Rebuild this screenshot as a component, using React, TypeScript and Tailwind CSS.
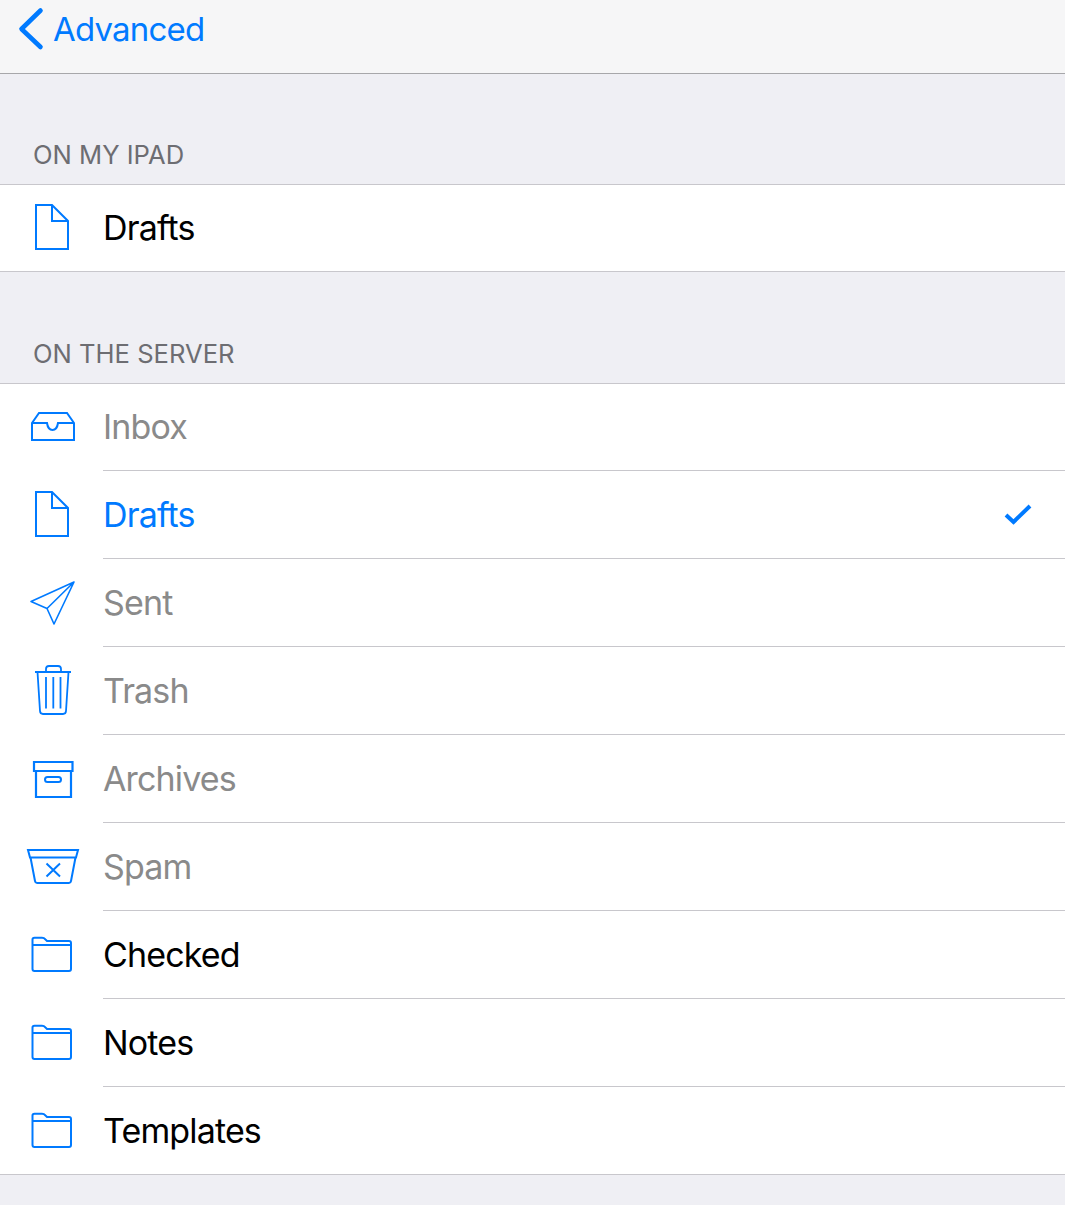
const blue = "#007aff";

function Icon({ top, children }: { top: number; children: React.ReactNode }) {
  return (
    <svg
      className="w-[60px] h-[60px] shrink-0 ml-[22px] mr-[21px]"
      viewBox={`22 ${top} 60 60`}
      fill="none"
      stroke={blue}
      strokeWidth={2}
    >
      {children}
    </svg>
  );
}

const doc = (y: number) => (
  <path d={`M36 ${y}H52L68 ${y + 16}V${y + 44}H36ZM52 ${y}V${y + 16}H68`} />
);
const folder = (y: number) => (
  <path
    d={`M32.500 ${y + 24}V${y + 2.5}Q32.500 ${y + 0.8} 34.500 ${y + 0.8}H42Q44 ${y + 0.8} 45.500 ${y + 2.5}L47 ${y + 4}H69Q71 ${y + 4} 71 ${y + 6}V${y + 32}Q71 ${y + 34} 69 ${y + 34}H34.500Q32.500 ${y + 34} 32.500 ${y + 32}ZM32.500 ${y + 8}H71`}
  />
);

const Row = ({
  label,
  icon,
  color = "text-black",
  first = false,
  check = false,
}: {
  label: string;
  icon: React.ReactNode;
  color?: string;
  first?: boolean;
  check?: boolean;
}) => (
  <div className={`flex items-stretch bg-white ${first ? "h-[86px]" : "h-[87px]"}`}>
    <div className="flex items-center">{icon}</div>
    <div className={`flex-1 flex items-center ${color}`}>
      <span className={`flex-1 ${first ? "" : "pt-px"}`}>{label}</span>
      {check && (
        <svg className="w-[30px] h-[24px] mr-[32px]" viewBox="1003 503 30 24" fill="none" stroke={blue} strokeWidth={4}>
          <path d="M1006 515L1013.500 522L1030 506" />
        </svg>
      )}
    </div>
  </div>
);

const Sep = ({ inset }: { inset?: boolean }) => (
  <div className="h-px bg-white">
    <div className={`h-px bg-[#c8c7cc] ${inset ? "ml-[103px]" : ""}`} />
  </div>
);

export default function App() {
  return (
    <div
      className="w-[1065px] h-[1205px] overflow-hidden bg-[#efeff4] text-[34px] leading-[40px] tracking-[-0.85px]"
      style={{ fontFamily: "Inter, 'Liberation Sans', sans-serif" }}
    >
      <header className="h-[74px] bg-[#f6f6f7] border-b border-[#a7a7aa] flex items-start">
        <div className="flex items-center h-[58px] text-[#007aff] text-[33px] tracking-[-0.8px]">
          <svg className="w-[53px] h-[58px] shrink-0" viewBox="0 0 53 58" fill="none" stroke={blue} strokeWidth={4.6} strokeLinecap="round" strokeLinejoin="round">
            <path d="M40.500 10.500L21.500 29L40.500 47" />
          </svg>
          <span>Advanced</span>
        </div>
      </header>

      <div className="h-[110px] flex items-end pl-[33px] pb-[13px] text-[25.600px] leading-[32px] tracking-[0px] text-[#6d6d72]">
        ON MY IPAD
      </div>
      <Sep />
      <Row label="Drafts" first icon={<Icon top={198}>{doc(205)}</Icon>} />
      <Sep />

      <div className="h-[111px] flex items-end pl-[33px] pb-[13px] text-[25.600px] leading-[32px] tracking-[0px] text-[#6d6d72]">
        ON THE SERVER
      </div>
      <Sep />
      <Row
        label="Inbox"
        first
        color="text-[#8a8a8a]"
        icon={
          <Icon top={398}>
            <path d="M32 424L39 414H67L74 424V441H32ZM32 424H47Q48 431 52.500 431Q57 431 58 424H74" />
          </Icon>
        }
      />
      <Sep inset />
      <Row label="Drafts" color="text-[#007aff]" check icon={<Icon top={485}>{doc(492)}</Icon>} />
      <Sep inset />
      <Row
        label="Sent"
        color="text-[#8a8a8a]"
        icon={
          <Icon top={573}>
            <path d="M74 582L31 601.500L47 608.500L54 624ZM74 582L47 608.500" strokeLinejoin="round" strokeWidth={1.6} />
          </Icon>
        }
      />
      <Sep inset />
      <Row
        label="Trash"
        color="text-[#8a8a8a]"
        icon={
          <Icon top={661}>
            <path d="M35 672H71M46 672V669Q46 666 49 666H58Q61 666 61 669V672M37.500 672L40 711Q40.200 714 43 714H63Q65.800 714 66 711L68.500 672M46 677V708.500M53.300 677V708.500M60.500 677V708.500" strokeWidth={1.8} />
          </Icon>
        }
      />
      <Sep inset />
      <Row
        label="Archives"
        color="text-[#8a8a8a]"
        icon={
          <Icon top={749}>
            <path d="M34 762H72.500V771H34ZM36 771V797H71V771" strokeWidth={2.200} />
            <rect x="45" y="777" width="16" height="5" rx="2.500" />
          </Icon>
        }
      />
      <Sep inset />
      <Row
        label="Spam"
        color="text-[#8a8a8a]"
        icon={
          <Icon top={837}>
            <path d="M28 850H78L76 857.500H30ZM30.500 857.500L35 881Q35.400 883 37 883H69Q70.600 883 71 881L75.500 857.500M46.500 863.500L60 876.500M60 863.500L46.500 876.500" />
          </Icon>
        }
      />
      <Sep inset />
      <Row label="Checked" icon={<Icon top={925}>{folder(937)}</Icon>} />
      <Sep inset />
      <Row label="Notes" icon={<Icon top={1013}>{folder(1025)}</Icon>} />
      <Sep inset />
      <Row label="Templates" icon={<Icon top={1101}>{folder(1113)}</Icon>} />
      <Sep />
    </div>
  );
}
